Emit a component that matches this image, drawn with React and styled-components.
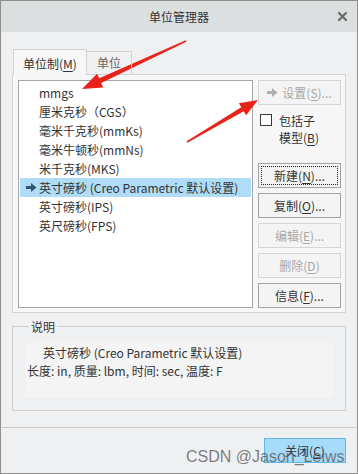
import React from "react";
import styled, { createGlobalStyle } from "styled-components";

const GlobalStyle = createGlobalStyle`
  html, body { margin: 0; padding: 0; background: #ffffff; }
  body { font-family: "Noto Sans CJK SC", "Microsoft YaHei", sans-serif; }
  * { box-sizing: border-box; }
`;

const Window = styled.div`
  position: relative;
  width: 358px;
  height: 474px;
  border: 1px solid #8e8e8e;
  background: #eff0f1;
  display: flex;
  flex-direction: column;
  overflow: hidden;
  color: #333;
  font-size: 12px;
`;

const TitleBar = styled.div`
  height: 31px;
  background: #dcdfe0;
  display: grid;
  grid-template-columns: 1fr auto 1fr;
  align-items: center;
  line-height: 31px;
  font-size: 12px;
  color: #333;
`;

const TitleText = styled.div`
  grid-column: 2;
`;

const CloseX = styled.div`
  grid-column: 3;
  justify-self: end;
  margin-right: 10px;
  display: flex;
  align-items: center;
`;

const Body = styled.div`
  flex: 1;
  display: flex;
  flex-direction: column;
  padding: 17px 11px 0;
`;

const TabRow = styled.div`
  display: flex;
  align-items: flex-end;
  height: 26px;
  padding-left: 1px;
  margin-bottom: -1px;
  position: relative;
  z-index: 1;
`;

const Tab = styled.div`
  border: 1px solid #d3d3d3;
  border-bottom: none;
  height: ${(p) => (p.$active ? "26px" : "24px")};
  padding: ${(p) => (p.$active ? "2px 9px 0" : "0 10px")};
  line-height: ${(p) => (p.$active ? "23px" : "22px")};
  background: ${(p) => (p.$active ? "#f7f7f7" : "transparent")};
  color: ${(p) => (p.$active ? "#333" : "#666")};
  margin-left: ${(p) => (p.$active ? "0" : "-1px")};
  white-space: nowrap;
`;

const Panel = styled.div`
  height: 239px;
  border: 1px solid #d3d3d3;
  background: #f7f7f7;
  padding: 5px 4px 4px 5px;
  display: flex;
  gap: 5px;
`;

const List = styled.ul`
  width: 235px;
  margin: 0;
  padding: 2px 1px;
  list-style: none;
  background: #ffffff;
  border: 1px solid #a5a5a5;
`;

const Row = styled.li`
  height: 19px;
  display: flex;
  align-items: center;
  line-height: 19px;
  white-space: nowrap;
  color: #333;
  background: ${(p) => (p.$selected ? "#afdcf6" : "transparent")};
`;

const IconSlot = styled.span`
  width: 19px;
  flex: none;
  display: flex;
  align-items: center;
  padding-left: 6px;
`;

const RightCol = styled.div`
  width: 83px;
  display: flex;
  flex-direction: column;
`;

const Button = styled.div`
  height: 25px;
  width: ${(p) => p.$w || "100%"};
  border: 1px solid ${(p) => (p.$disabled ? "#d6d6d6" : p.$primary ? "#62b6ea" : "#a3a3a3")};
  background: ${(p) => (p.$primary ? "#a6dbfa" : "#f4f4f4")};
  color: ${(p) => (p.$disabled ? "#a8a8a8" : "#333")};
  display: flex;
  align-items: center;
  justify-content: center;
  gap: 4px;
  line-height: 23px;
  white-space: nowrap;
  outline: ${(p) => (p.$focus ? "1px dotted #222" : "none")};
  outline-offset: -4px;
`;

const Label = styled.span`
  white-space: nowrap;
`;

const Key = styled.span`
  text-decoration: underline;
  text-underline-offset: 2px;
`;

const CheckRow = styled.div`
  margin-top: 7px;
  padding-left: 2px;
  display: flex;
  align-items: flex-start;
  gap: 7px;
`;

const Box = styled.span`
  width: 12px;
  height: 12px;
  margin-top: 2px;
  border: 1px solid #3a3a3a;
  background: #ffffff;
  flex: none;
`;

const CheckLabel = styled.div`
  line-height: 17px;
`;

const ButtonStack = styled.div`
  margin-top: auto;
  display: flex;
  flex-direction: column;
  gap: 5px;
`;

const Group = styled.div`
  position: relative;
  margin-top: 13px;
  height: 85px;
  border: 1px solid #cfcfcf;
  padding: 16px 12px 0;
`;

const Legend = styled.span`
  position: absolute;
  top: -7px;
  left: 16px;
  padding: 0 2px;
  background: #eff0f1;
  line-height: 13px;
`;

const DescBox = styled.div`
  height: 55px;
  background: #f4f4f4;
  padding: 1px 2px;
  line-height: 18px;
  color: #333;
`;

const DescLine = styled.div`
  padding-left: ${(p) => p.$indent || 0}px;
  white-space: nowrap;
`;

const Separator = styled.div`
  height: 1px;
  margin: 16px -10px 0;
  background: #c8c8c8;
`;

const Footer = styled.div`
  margin-top: 10px;
  display: flex;
  justify-content: flex-end;
`;

const Watermark = styled.div`
  position: absolute;
  left: 185px;
  top: 447px;
  font-family: "Liberation Sans", Arial, sans-serif;
  font-size: 16px;
  line-height: 18px;
  color: rgba(90, 90, 90, 0.78);
  white-space: nowrap;
  pointer-events: none;
`;

const Overlay = styled.svg`
  position: absolute;
  left: -1px;
  top: -1px;
  pointer-events: none;
`;

const Arrow = ({ color }) => (
  <svg width="11" height="9" viewBox="0 0 11 9">
    <rect x="0" y="3" width="6" height="3" fill={color} />
    <polygon points="5,0 10.5,4.5 5,9" fill={color} />
  </svg>
);

const items = [
  "mmgs",
  "厘米克秒（CGS）",
  "毫米千克秒(mmKs)",
  "毫米牛顿秒(mmNs)",
  "米千克秒(MKS)",
  "英寸磅秒 (Creo Parametric 默认设置)",
  "英寸磅秒(IPS)",
  "英尺磅秒(FPS)",
];
const selectedIndex = 5;

export default function App() {
  return (
    <>
      <GlobalStyle />
      <Window>
        <TitleBar>
          <TitleText>单位管理器</TitleText>
          <CloseX>
            <svg width="9" height="9" viewBox="0 0 9 9">
              <path d="M1 1 L8 8 M8 1 L1 8" stroke="#6a6a6a" strokeWidth="2.2" strokeLinecap="square" />
            </svg>
          </CloseX>
        </TitleBar>
        <Body>
          <TabRow>
            <Tab $active>
              单位制(<Key>M</Key>)
            </Tab>
            <Tab>单位</Tab>
          </TabRow>
          <Panel>
            <List>
              {items.map((t, i) => (
                <Row key={t} $selected={i === selectedIndex}>
                  <IconSlot>{i === selectedIndex && <Arrow color="#2f5475" />}</IconSlot>
                  {t}
                </Row>
              ))}
            </List>
            <RightCol>
              <Button $disabled>
                <Arrow color="#b0b0b0" />
                <Label>
                  设置(<Key>S</Key>)...
                </Label>
              </Button>
              <CheckRow>
                <Box />
                <CheckLabel>
                  包括子
                  <br />
                  模型(<Key>B</Key>)
                </CheckLabel>
              </CheckRow>
              <ButtonStack>
                <Button $focus>
                  <Label>
                    新建(<Key>N</Key>)...
                  </Label>
                </Button>
                <Button>
                  <Label>
                    复制(<Key>O</Key>)...
                  </Label>
                </Button>
                <Button $disabled>
                  <Label>
                    编辑(<Key>E</Key>)...
                  </Label>
                </Button>
                <Button $disabled>
                  <Label>
                    删除(<Key>D</Key>)
                  </Label>
                </Button>
                <Button>
                  <Label>
                    信息(<Key>F</Key>)...
                  </Label>
                </Button>
              </ButtonStack>
            </RightCol>
          </Panel>
          <Group>
            <Legend>说明</Legend>
            <DescBox>
              <DescLine $indent={16}>英寸磅秒 (Creo Parametric 默认设置)</DescLine>
              <DescLine>长度: in, 质量: lbm, 时间: sec, 温度: F</DescLine>
            </DescBox>
          </Group>
          <Separator />
          <Footer>
            <Button $primary $w="82px">
              <Label>
                关闭(<Key>C</Key>)
              </Label>
            </Button>
          </Footer>
        </Body>
        <Watermark>CSDN @Jason_Leiws</Watermark>
        <Overlay width="358" height="474" viewBox="0 0 358 474">
          <polygon
            points="186.3,41.7 101.2,82.9 103.3,87.4 82,89 97.1,73.8 99.2,78.3 185.7,40.3"
            fill="#e8231c"
          />
          <polygon
            points="187.4,142.7 243.7,111.2 246.1,115.2 258,100 238.9,103.2 241.3,107.2 186.6,141.3"
            fill="#e8231c"
          />
        </Overlay>
      </Window>
    </>
  );
}
